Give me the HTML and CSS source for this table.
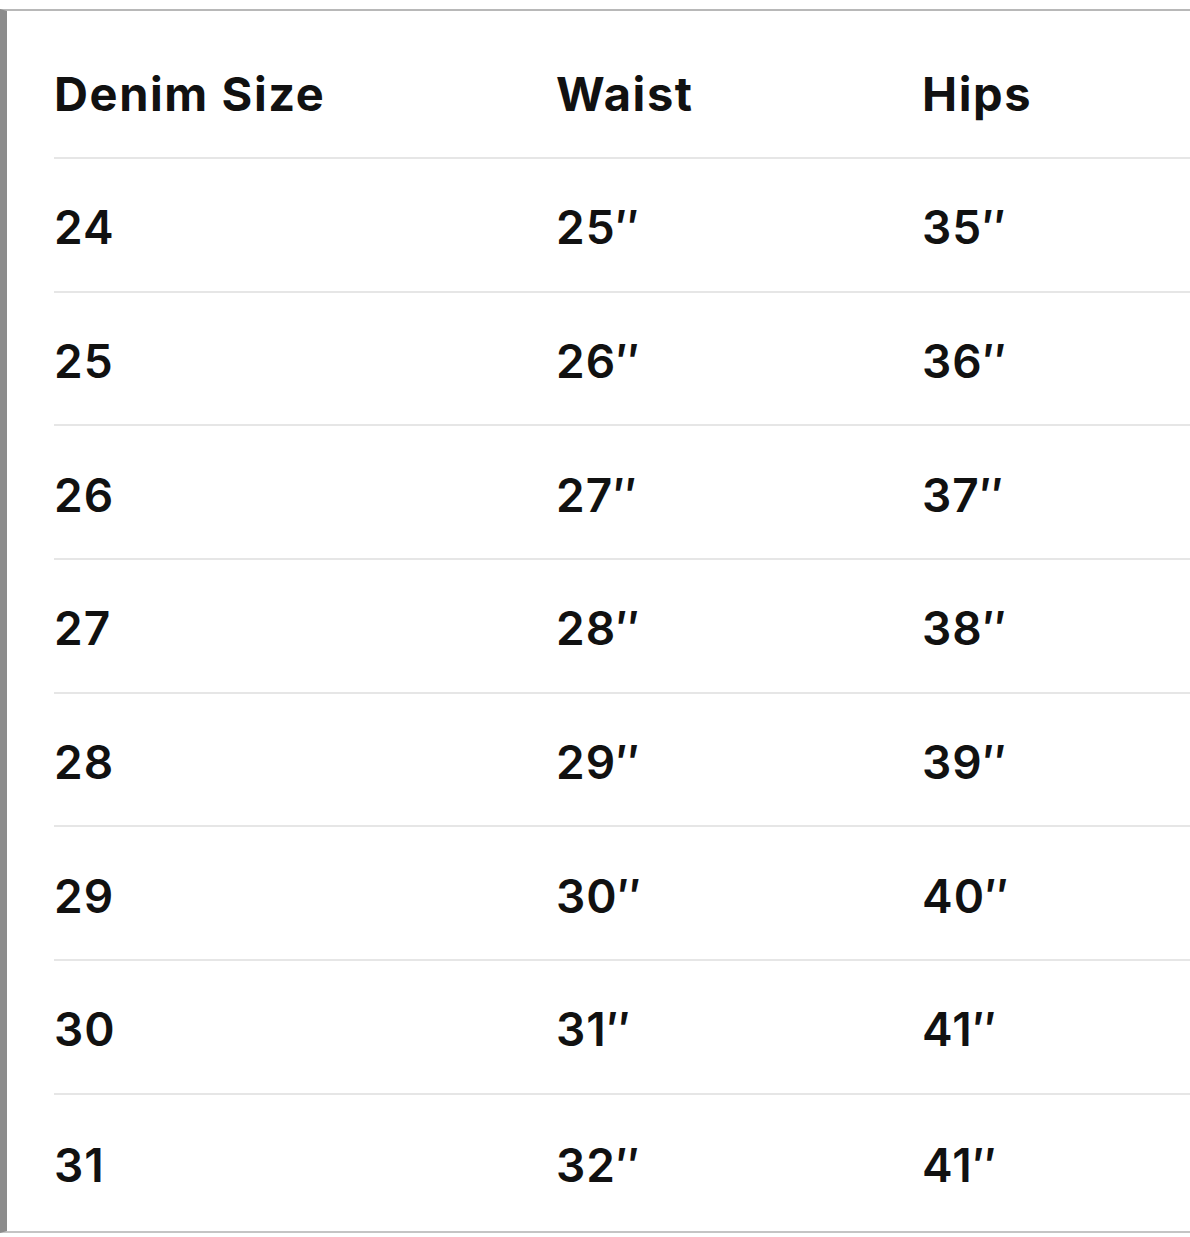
FILE: index.html
```html
<!DOCTYPE html>
<html lang="en">
<head>
<meta charset="utf-8">
<title>Denim Size Chart</title>
<link rel="stylesheet" href="styles.css">
</head>
<body>
<div class="frame">
  <div class="chart">
    <div class="row head">
      <div class="cell">Denim Size</div>
      <div class="cell">Waist</div>
      <div class="cell">Hips</div>
    </div>
    <div class="row"><div class="cell">24</div><div class="cell">25″</div><div class="cell">35″</div></div>
    <div class="row"><div class="cell">25</div><div class="cell">26″</div><div class="cell">36″</div></div>
    <div class="row"><div class="cell">26</div><div class="cell">27″</div><div class="cell">37″</div></div>
    <div class="row"><div class="cell">27</div><div class="cell">28″</div><div class="cell">38″</div></div>
    <div class="row"><div class="cell">28</div><div class="cell">29″</div><div class="cell">39″</div></div>
    <div class="row"><div class="cell">29</div><div class="cell">30″</div><div class="cell">40″</div></div>
    <div class="row"><div class="cell">30</div><div class="cell">31″</div><div class="cell">41″</div></div>
    <div class="row last"><div class="cell">31</div><div class="cell">32″</div><div class="cell">41″</div></div>
  </div>
</div>
</body>
</html>
```
FILE: styles.css
```css
html, body {
  margin: 0;
  padding: 0;
  background: #ffffff;
}
body {
  font-family: Inter, "Liberation Sans", sans-serif;
  color: #111111;
}
.frame {
  margin-top: 9px;
  border-top: 2px solid #b8b8b8;
  border-bottom: 2px solid #c4c4c4;
  border-left: 7px solid #8c8c8c;
  padding-left: 47px;
}
.chart {
  display: flex;
  flex-direction: column;
}
.row {
  display: grid;
  grid-template-columns: 502px 366px 1fr;
  align-items: center;
  height: 133.7px;
  box-sizing: border-box;
  border-top: 2px solid #e6e6e6;
  padding-top: 5px;
  font-size: 46px;
  font-weight: 600;
  letter-spacing: 1px;
}
.row.head {
  height: 146px;
  border-top: none;
  padding-top: 18px;
  font-size: 47px;
  font-weight: 700;
  letter-spacing: 1.6px;
}
.row.last {
  height: 138px;
}
.cell {
  white-space: nowrap;
}
```
